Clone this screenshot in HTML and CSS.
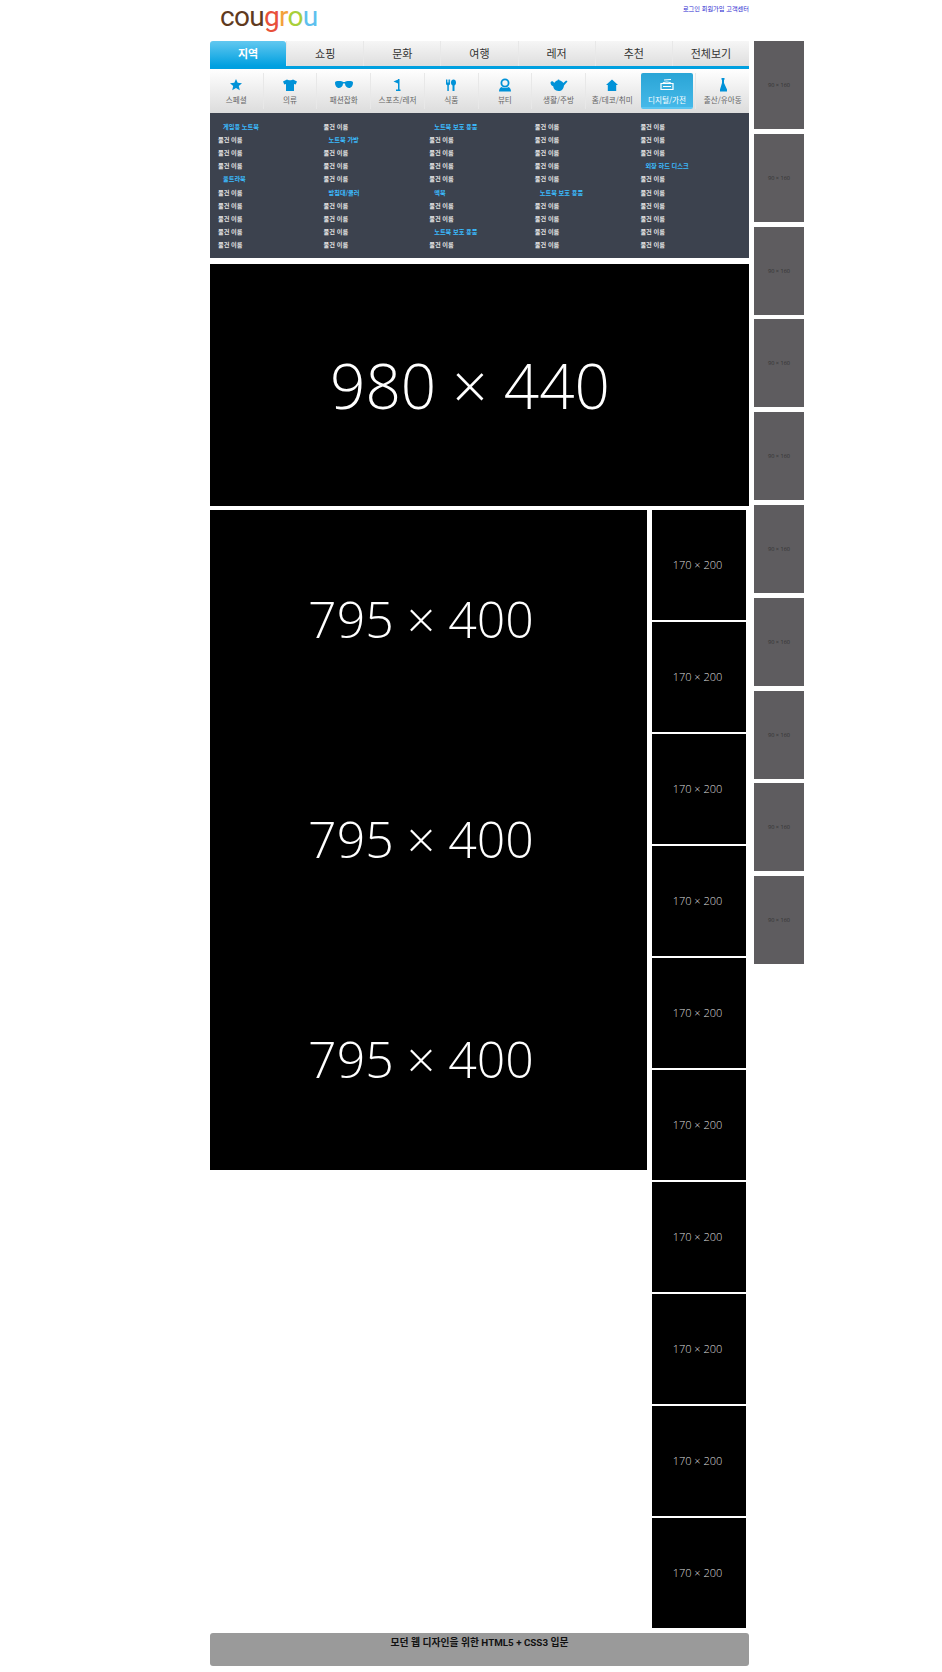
FILE: index.html
```html
<!DOCTYPE html>
<html lang="ko">
<head>
    <meta charset="UTF-8">
    <title>cougrou</title>
    <link rel="stylesheet" href="styles.css">
</head>
<body>
    <div class="page">
        <div class="container">
            <header class="top">
                <div class="logo"><span class="c1">cou</span><span class="c2">g</span><span class="c3">r</span><span class="c4">o</span><span class="c5">u</span></div>
                <div class="util"><a>로그인</a> <a>회원가입</a> <a>고객센터</a></div>
            </header>
            <nav class="tabs">
                <a class="active">지역</a><a>쇼핑</a><a>문화</a><a>여행</a><a>레저</a><a>추천</a><a>전체보기</a>
            </nav>
            <nav class="cats">
                <a><svg viewBox="0 0 18 14"><path d="M9 1l1.700 3.800 4.300.4-3.200 2.900 1 4.200L9 10.100l-3.800 2.200 1-4.200L3 5.200l4.300-.4z"/></svg>스페셜</a>
                <a><svg viewBox="0 0 18 14"><path d="M6 1.500c.8 1 5.200 1 6 0l4 2-1.300 3-1.700-.6V13H5V5.900l-1.700.6L2 3.500z"/></svg>의류</a>
                <a><svg viewBox="0 0 18 14"><path d="M4 3c2 0 3.500.3 4 1h2c.5-.7 2-1 4-1s4 .3 4 1.500C18 7.500 16.500 10 14 10s-4-2.300-4-4.500H8C8 7.700 6.500 10 4 10S0 7.500 0 4.500C0 3.300 2 3 4 3z"/></svg>패션잡화</a>
                <a><svg viewBox="0 0 18 14"><path d="M10 1.500v4L5.500 3.500zM10 1h1.500v10.500h1V13H8v-1.500h2z"/></svg>스포츠/레저</a>
                <a><svg viewBox="0 0 18 14"><path d="M4 1.500h1v3h.6v-3h.9v3h.6v-3h1v4c0 1-.7 1.500-1.300 1.800V13H5.300V7.300C4.700 7 4 6.500 4 5.500zM11.500 1.500c1.500 0 2.500 1.300 2.500 3s-.7 2.600-1.500 3V13h-2V7.500C9.700 7.100 9 6.200 9 4.500s1-3 2.500-3z"/></svg>식품</a>
                <a><svg viewBox="0 0 18 14"><path fill-rule="evenodd" d="M9 .5a4.500 4.500 0 1 1 0 9 4.500 4.500 0 0 1 0-9zm0 1.800a2.700 2.700 0 1 0 0 5.400 2.700 2.700 0 0 0 0-5.400zM3 13.500c0-2.500 1.300-4 2.600-4.500 1.600 1.400 5.200 1.400 6.800 0 1.300.5 2.600 2 2.600 4.500z"/></svg>뷰티</a>
                <a><svg viewBox="0 0 18 14"><path d="M8.500 1.500c.7 0 1.100.3 1.100.9 1.700.3 3 1.200 3.600 2.500l3-2.400 1.300.9-3.500 4C13.500 10.600 12 13 8.500 13s-5-2.400-5.300-4.700C1.700 8 .5 6.400.5 4.500c.8-1.700 2.700-1.600 3.700.6.600-1.500 1.800-2.400 3.300-2.700 0-.6.300-.9 1-.9z"/></svg>생활/주방</a>
                <a><svg viewBox="0 0 18 14"><path d="M9 1.500l6 5.500h-1.800v6H4.800V7H3z"/></svg>홈/데코/취미</a>
                <a class="active"><svg viewBox="0 0 18 14"><path class="device" d="M3 5.500h12v6H3zM5 5.500c.5-2 7-2 8 0M6 2l7-.5M5 8.500h8"/></svg>디지털/가전</a>
                <a><svg viewBox="0 0 18 14"><path d="M7.500 0h3v1.500l-.5.5v3l3 6.500v2h-7v-2L8 5V2l-.5-.5z"/></svg>출산/유아동</a>
            </nav>
            <section class="megamenu">
                <ul>
                    <li class="head">게임용 노트북</li><li>물건 이름</li><li>물건 이름</li><li>물건 이름</li><li class="head">울트라북</li>
                    <li>물건 이름</li><li>물건 이름</li><li>물건 이름</li><li>물건 이름</li><li>물건 이름</li>
                </ul>
                <ul>
                    <li>물건 이름</li><li class="head">노트북 가방</li><li>물건 이름</li><li>물건 이름</li><li>물건 이름</li>
                    <li class="head">받침대/쿨러</li><li>물건 이름</li><li>물건 이름</li><li>물건 이름</li><li>물건 이름</li>
                </ul>
                <ul>
                    <li class="head">노트북 보호 용품</li><li>물건 이름</li><li>물건 이름</li><li>물건 이름</li><li>물건 이름</li>
                    <li class="head">맥북</li><li>물건 이름</li><li>물건 이름</li><li class="head">노트북 보호 용품</li><li>물건 이름</li>
                </ul>
                <ul>
                    <li>물건 이름</li><li>물건 이름</li><li>물건 이름</li><li>물건 이름</li><li>물건 이름</li>
                    <li class="head">노트북 보호 용품</li><li>물건 이름</li><li>물건 이름</li><li>물건 이름</li><li>물건 이름</li>
                </ul>
                <ul>
                    <li>물건 이름</li><li>물건 이름</li><li>물건 이름</li><li class="head">외장 하드 디스크</li><li>물건 이름</li>
                    <li>물건 이름</li><li>물건 이름</li><li>물건 이름</li><li>물건 이름</li><li>물건 이름</li>
                </ul>
            </section>
            <div class="ph hero">980 × 440</div>
            <div class="columns">
                <div class="stack">
                    <div class="ph wide">795 × 400</div>
                    <div class="ph wide">795 × 400</div>
                    <div class="ph wide">795 × 400</div>
                </div>
                <div class="side">
                    <div class="ph small">170 × 200</div>
                    <div class="ph small">170 × 200</div>
                    <div class="ph small">170 × 200</div>
                    <div class="ph small">170 × 200</div>
                    <div class="ph small">170 × 200</div>
                    <div class="ph small">170 × 200</div>
                    <div class="ph small">170 × 200</div>
                    <div class="ph small">170 × 200</div>
                    <div class="ph small">170 × 200</div>
                    <div class="ph small">170 × 200</div>
                </div>
            </div>
            <footer class="footer">모던 웹 디자인을 위한 HTML5 + CSS3 입문</footer>
        </div>
        <aside class="ads">
            <div class="ad">90 × 160</div>
            <div class="ad">90 × 160</div>
            <div class="ad">90 × 160</div>
            <div class="ad">90 × 160</div>
            <div class="ad">90 × 160</div>
            <div class="ad">90 × 160</div>
            <div class="ad">90 × 160</div>
            <div class="ad">90 × 160</div>
            <div class="ad">90 × 160</div>
            <div class="ad">90 × 160</div>
        </aside>
    </div>
</body>
</html>
```

FILE: styles.css
```css
* {
    box-sizing: border-box;
}
body {
    margin: 0;
    font-family: "Noto Sans CJK KR", "Noto Sans", sans-serif;
    background-color: #fff;
}
.page {
    display: flex;
    align-items: flex-start;
    padding-left: 210px;
}
.container {
    width: 539px;
}
.top {
    display: flex;
    justify-content: space-between;
    height: 41px;
}
.logo {
    padding-left: 10px;
    font-family: Roboto, sans-serif;
    font-size: 28px;
    line-height: 33px;
    letter-spacing: -0.700px;
}
.c1 { color: #5f3a1e; }
.c2 { color: #e8503a; }
.c3 { color: #f3a13c; }
.c4 { color: #a8cf3a; }
.c5 { color: #5cc0ee; }
.util {
    padding-top: 4px;
    font-size: 6.200px;
    line-height: 10px;
    color: #2a1fd0;
}

.tabs {
    display: flex;
    height: 28px;
    border-bottom: 3px solid #00a0e0;
}
.tabs a {
    flex: 1;
    text-align: center;
    font-size: 11px;
    line-height: 25px;
    color: #333;
    background: linear-gradient(#f6f6f6, #dedede);
    border-left: 1px solid #e8e8e8;
}
.tabs a.active {
    color: #fff;
    font-weight: 700;
    border-left: none;
    border-radius: 3px 3px 0 0;
    background: linear-gradient(#62c8f0, #00a0e0);
}
.cats {
    display: flex;
    height: 44px;
    padding: 4px 0;
    background: linear-gradient(#fff, #dcdcdc);
}
.cats a {
    flex: 1;
    display: flex;
    flex-direction: column;
    align-items: center;
    padding-top: 5px;
    font-size: 7.600px;
    line-height: 12px;
    color: #666;
    border-left: 1px solid #e8e8e8;
}
.cats a:first-child {
    border-left: none;
}
.cats svg {
    width: 18px;
    height: 14px;
    margin-bottom: 2px;
    fill: #0092d8;
}
.cats a.active {
    margin: 0 2px;
    color: #fff;
    border-left: none;
    border-radius: 2px;
    border-bottom: 2px solid #5bc6f2;
    background: linear-gradient(#2aa5d6, #45b8e8);
}
.cats .device {
    fill: none;
    stroke: #fff;
    stroke-width: 1.200;
}
.megamenu {
    display: flex;
    height: 145px;
    padding: 7px 0 0 8px;
    background-color: #3c424e;
}
.megamenu ul {
    width: 105.600px;
    margin: 0;
    padding: 0;
    list-style: none;
}
.megamenu li {
    height: 13px;
    font-size: 6.200px;
    font-weight: 700;
    line-height: 13px;
    color: #e4e4e4;
}
.megamenu li:nth-child(5) {
    height: 14px;
}
.megamenu li.head {
    padding-left: 5px;
    color: #3bbcff;
}
.ph {
    display: flex;
    align-items: center;
    justify-content: center;
    font-family: "Open Sans", sans-serif;
    font-weight: 300;
    color: #fff;
    background-color: #000;
}
.hero {
    height: 242px;
    margin-top: 6px;
    padding-right: 19px;
    font-size: 62px;
}
.columns {
    display: flex;
    margin-top: 4px;
}
.stack {
    width: 437px;
}
.wide {
    height: 220px;
    padding: 0 15px 2px 0;
    font-size: 50px;
}
.side {
    margin-left: 5px;
    width: 94px;
}
.small {
    height: 110px;
    margin-bottom: 2px;
    padding: 0 3px 2px 0;
    font-size: 11px;
    color: #ddd;
}
.footer {
    height: 33px;
    margin-top: 3px;
    padding-top: 3px;
    text-align: center;
    font-family: Roboto, "Noto Sans CJK KR", sans-serif;
    font-size: 9.800px;
    font-weight: 700;
    line-height: 14px;
    color: #111;
    background-color: #9a9a9a;
    border-radius: 3px;
}
.ads {
    width: 50px;
    margin: 41px 0 0 5px;
}
.ad {
    display: flex;
    align-items: center;
    justify-content: center;
    height: 88px;
    margin-bottom: 4.800px;
    font-family: "Open Sans", sans-serif;
    font-size: 5.600px;
    color: #333;
    background-color: #5e5c5f;
}
```
